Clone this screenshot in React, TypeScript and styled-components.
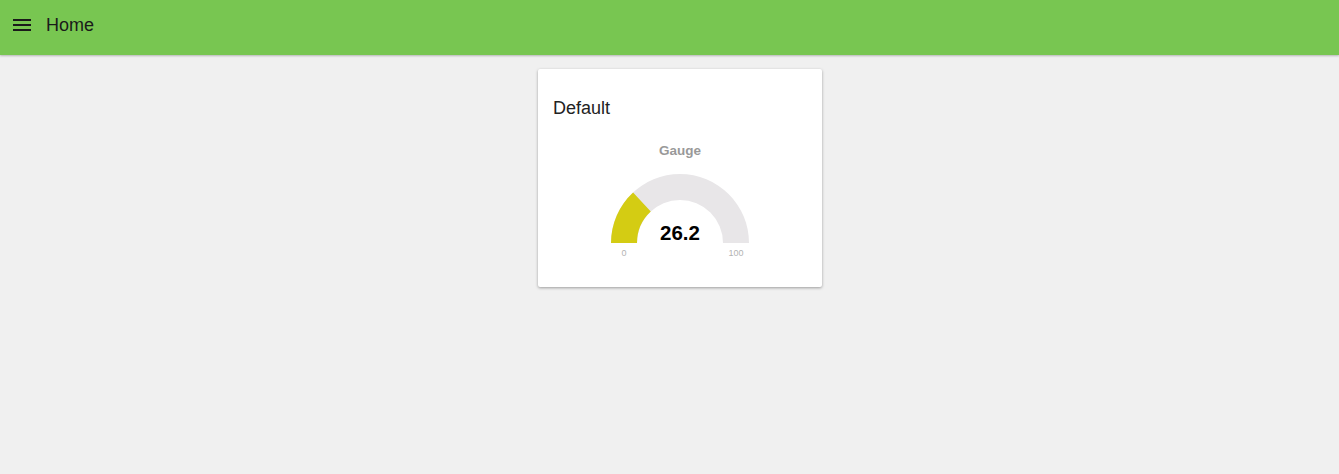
import React from "react";
import styled, { createGlobalStyle } from "styled-components";

const Global = createGlobalStyle`
  html, body { margin: 0; padding: 0; background: #f0f0f0; }
  body { font-family: "Liberation Sans", Arial, sans-serif; }
`;

const Page = styled.div`
  min-height: 474px;
  display: flex;
  flex-direction: column;
`;

const Toolbar = styled.header`
  height: 55px;
  box-sizing: border-box;
  background: #78c651;
  display: flex;
  align-items: center;
  padding: 0 13px 6px;
  gap: 15px;
  box-shadow: 0 1px 2px rgba(0, 0, 0, 0.25);
`;

const MenuButton = styled.button`
  border: 0;
  background: none;
  padding: 0;
  width: 18px;
  height: 18px;
  display: flex;
  align-items: center;
  justify-content: center;
`;

const Title = styled.h1`
  margin: 0;
  font-size: 18px;
  font-weight: 400;
  color: #1a1a1a;
  position: relative;
  top: 1px;
`;

const Content = styled.main`
  display: flex;
  justify-content: center;
  padding-top: 14px;
  padding-left: 21px;
`;

const Card = styled.section`
  width: 284px;
  height: 218px;
  background: #fff;
  box-shadow: 0 1px 3px rgba(0, 0, 0, 0.35);
  border-radius: 2px;
  box-sizing: border-box;
  padding: 29px 15px 0;
  display: flex;
  flex-direction: column;
`;

const CardTitle = styled.h2`
  margin: 0;
  font-size: 18px;
  font-weight: 400;
  color: #222;
  line-height: 20px;
`;

const GaugeWrap = styled.div`
  display: flex;
  justify-content: center;
  margin: 11px -15px 0;
`;

const cx = 142;
const cy = 114;
const R = 69;
const r = 43;

function arcPath(fromDeg: number, toDeg: number) {
  const rad = (d: number) => (d * Math.PI) / 180;
  const p = (rr: number, d: number) => [cx + rr * Math.cos(rad(d)), cy - rr * Math.sin(rad(d))];
  const [x1, y1] = p(R, fromDeg);
  const [x2, y2] = p(R, toDeg);
  const [x3, y3] = p(r, toDeg);
  const [x4, y4] = p(r, fromDeg);
  return `M${x1} ${y1} A${R} ${R} 0 0 1 ${x2} ${y2} L${x3} ${y3} A${r} ${r} 0 0 0 ${x4} ${y4} Z`;
}

function Gauge({ value, min, max, label }: { value: number; min: number; max: number; label: string }) {
  const frac = (value - min) / (max - min);
  const end = 180 - 180 * frac;
  const font = "Liberation Sans, Arial, sans-serif";
  return (
    <svg width="284" height="140" viewBox="0 0 284 140">
      <text x={cx} y={26} textAnchor="middle" fontFamily={font} fontWeight="700" fontSize="13.5" fill="#999">
        {label}
      </text>
      <path d={arcPath(180, 0)} fill="#e8e6e8" />
      <path d={arcPath(180, end)} fill="#d4cc13" />
      <text x={cx} y={111} textAnchor="middle" fontFamily={font} fontWeight="700" fontSize="20.5" fill="#000">
        {value}
      </text>
      <text x={cx - 56} y={127} textAnchor="middle" fontFamily={font} fontSize="9" fill="#b3b3b3">
        {min}
      </text>
      <text x={cx + 56} y={127} textAnchor="middle" fontFamily={font} fontSize="9" fill="#b3b3b3">
        {max}
      </text>
    </svg>
  );
}

export default function App() {
  return (
    <Page>
      <Global />
      <Toolbar>
        <MenuButton aria-label="menu">
          <svg width="18" height="12" viewBox="0 0 18 12">
            <rect x="0" y="0" width="18" height="2" fill="#1a1a1a" />
            <rect x="0" y="5" width="18" height="2" fill="#1a1a1a" />
            <rect x="0" y="10" width="18" height="2" fill="#1a1a1a" />
          </svg>
        </MenuButton>
        <Title>Home</Title>
      </Toolbar>
      <Content>
        <Card>
          <CardTitle>Default</CardTitle>
          <GaugeWrap>
            <Gauge value={26.2} min={0} max={100} label="Gauge" />
          </GaugeWrap>
        </Card>
      </Content>
    </Page>
  );
}
